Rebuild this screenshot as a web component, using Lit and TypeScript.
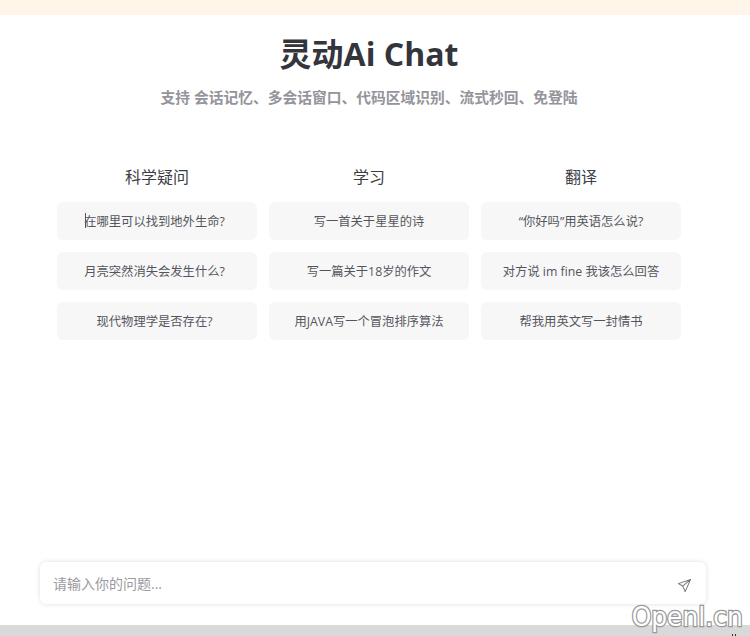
import { LitElement, html, css } from "lit";
import { customElement } from "lit/decorators.js";

const columns = [
  { title: "科学疑问", items: ["在哪里可以找到地外生命?", "月亮突然消失会发生什么?", "现代物理学是否存在?"] },
  { title: "学习", items: ["写一首关于星星的诗", "写一篇关于18岁的作文", "用JAVA写一个冒泡排序算法"] },
  { title: "翻译", items: ["“你好吗”用英语怎么说?", "对方说 im fine 我该怎么回答", "帮我用英文写一封情书"] },
];

@customElement("app-root")
export class AppRoot extends LitElement {
  static styles = css`
    :host {
      display: block;
      position: relative;
      width: 750px;
      height: 636px;
      overflow: hidden;
      background: #fff;
      font-family: "Open Sans", "Noto Sans CJK SC", sans-serif;
      color: #33343c;
    }
    .page { display: flex; flex-direction: column; height: 636px; }
    .notice { height: 15px; background: #fff5e9; flex: none; }
    .main { flex: 1; width: 738px; display: flex; flex-direction: column; align-items: center; }
    h1 { margin: 17px 0 0; font-size: 32px; line-height: 44px; font-weight: 700; color: #33343c; }
    .sub { margin: 10px 0 0; font-size: 14.75px; line-height: 22px; font-weight: 700; color: #94949a; }
    .grid { margin-top: 57px; display: grid; grid-template-columns: repeat(3, 200px); column-gap: 12px; }
    .col { display: flex; flex-direction: column; }
    .col h2 { margin: 0 0 13px; height: 24px; font-size: 16px; line-height: 24px; font-weight: 400; text-align: center; color: #3d3e45; }
    .card {
      position: relative;
      box-sizing: border-box;
      height: 38px; margin-bottom: 12.2px; padding-bottom: 1px; border-radius: 6px; background: #f7f7f8;
      display: flex; align-items: center; justify-content: center;
      font-size: 12.3px; color: #55565c; white-space: nowrap;
    }
    .first .card { padding-right: 5px; }
    .caret { position: absolute; left: 28px; top: 11px; width: 1px; height: 15px; background: #55565c; }
    .footer { flex: none; padding: 0 44px 21px 40px; }
    .input {
      height: 42px; border-radius: 6px; background: #fff;
      box-shadow: 0 0 5px rgba(0,0,0,0.13);
      display: flex; align-items: center; justify-content: space-between;
      padding: 0 14px;
      font-size: 14px; color: #9a9aa0;
    }
    .input span { margin-left: -1px; margin-top: -1px; }
    .input svg { display: block; margin: 4px 0 0 0; }
    .bar { flex: none; height: 11px; background: #d9d9d9; }
    .mark {
      position: absolute; right: 7px; top: 600px;
      font: 400 26px/34px "DejaVu Sans", sans-serif;
      color: #fff;
      -webkit-text-stroke: 2.6px #999;
      paint-order: stroke fill;
      transform: scaleX(0.96);
      transform-origin: right center;
    }
    .specks { position: absolute; left: 732px; top: 634px; display: flex; gap: 2px; }
    .specks i { display: block; width: 1px; height: 2px; background: #333; }
  `;

  render() {
    return html`
      <div class="page">
        <div class="notice"></div>
        <div class="main">
          <h1>灵动Ai Chat</h1>
          <p class="sub">支持 会话记忆、多会话窗口、代码区域识别、流式秒回、免登陆</p>
          <div class="grid">
            ${columns.map((c, ci) => html`
              <div class="col ${ci === 0 ? "first" : ""}">
                <h2>${c.title}</h2>
                ${c.items.map((t, i) => html`
                  <div class="card">${t}${ci === 0 && i === 0 ? html`<span class="caret"></span>` : ""}</div>
                `)}
              </div>
            `)}
          </div>
        </div>
        <div class="footer">
          <div class="input">
            <span>请输入你的问题...</span>
            <svg width="15" height="15" viewBox="0 0 16 16" fill="none" stroke="#77777f" stroke-width="1.1" stroke-linejoin="round">
              <path d="M14.5 1.5 1.5 6l4.6 2.6 2.6 5.9zM14.5 1.5 6.1 8.6" />
            </svg>
          </div>
        </div>
        <div class="bar"></div>
      </div>
      <div class="specks"><i></i><i></i></div>
      <div class="mark">Openl.cn</div>
    `;
  }
}
